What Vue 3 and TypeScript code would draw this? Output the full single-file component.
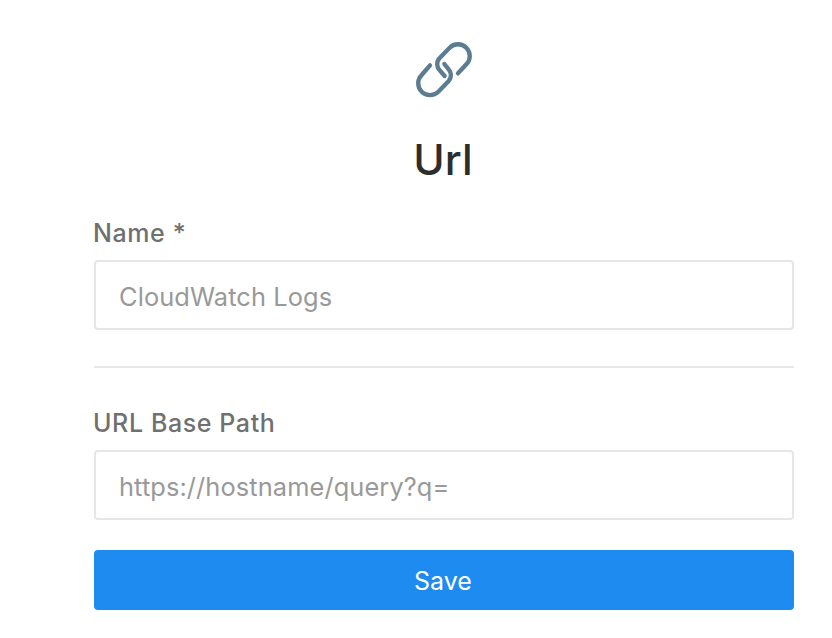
<script setup lang="ts">
const title: string = 'Url'
</script>

<template>
  <main class="page">
    <svg class="icon" viewBox="-3 0 270 240" width="90" height="80" aria-hidden="true">
      <path d="M174 130 L199 103 A35 35 0 0 0 149 53 L119 84 C108 96 110 112 120 122 L134 138" />
      <path d="M90 106 L65 135 A35 35 0 0 0 115 185 L146 153 C156 142 154 127 146 118 L133 102" />
    </svg>
    <h1 class="title">{{ title }}</h1>
    <form class="form" @submit.prevent>
      <label class="field">
        <span class="label">Name *</span>
        <input class="input" type="text" placeholder="CloudWatch Logs" />
      </label>
      <hr class="rule" />
      <label class="field">
        <span class="label">URL Base Path</span>
        <input class="input" type="text" placeholder="https://hostname/query?q=" />
      </label>
      <button class="save" type="submit">Save</button>
    </form>
  </main>
</template>

<style scoped>
.page {
  width: 700px;
  margin-left: 94px;
  padding-top: 30px;
  display: flex;
  flex-direction: column;
  align-items: center;
  font-family: Inter, "Liberation Sans", sans-serif;
}
.icon { display: block; fill: none; stroke: #5b7c91; stroke-width: 13; stroke-linecap: round; stroke-linejoin: round; }
.title {
  margin: 20px 0 0;
  padding-right: 2px;
  font-size: 42.5px;
  line-height: 60px;
  font-weight: 500;
  color: #2d2d2d;
}
.form { width: 100%; display: flex; flex-direction: column; margin-top: 26px; }
.field { display: flex; flex-direction: column; }
.label { font-size: 25px; line-height: 34px; font-weight: 500; letter-spacing: 0.6px; color: #707070; margin-bottom: 10px; margin-left: -1px; }
.input {
  box-sizing: border-box;
  height: 70px;
  width: 100%;
  padding: 2px 23px 0;
  border: 2px solid #e6e6e6;
  border-radius: 4px;
  font: 400 25.4px Inter, "Liberation Sans", sans-serif;
  letter-spacing: 0.1px;
  color: #333;
  outline: none;
}
.input::placeholder { color: #999; opacity: 1; }
.rule { width: 100%; border: 0; border-top: 2px solid #e8e8e8; margin: 36px 0 38px; }
.save {
  margin-top: 30px;
  height: 60px;
  border: 0;
  border-radius: 4px;
  background: #1e8bf1;
  color: #fff;
  font: 400 25px Inter, "Liberation Sans", sans-serif;
  padding: 2px 2px 0 0;
}
</style>
